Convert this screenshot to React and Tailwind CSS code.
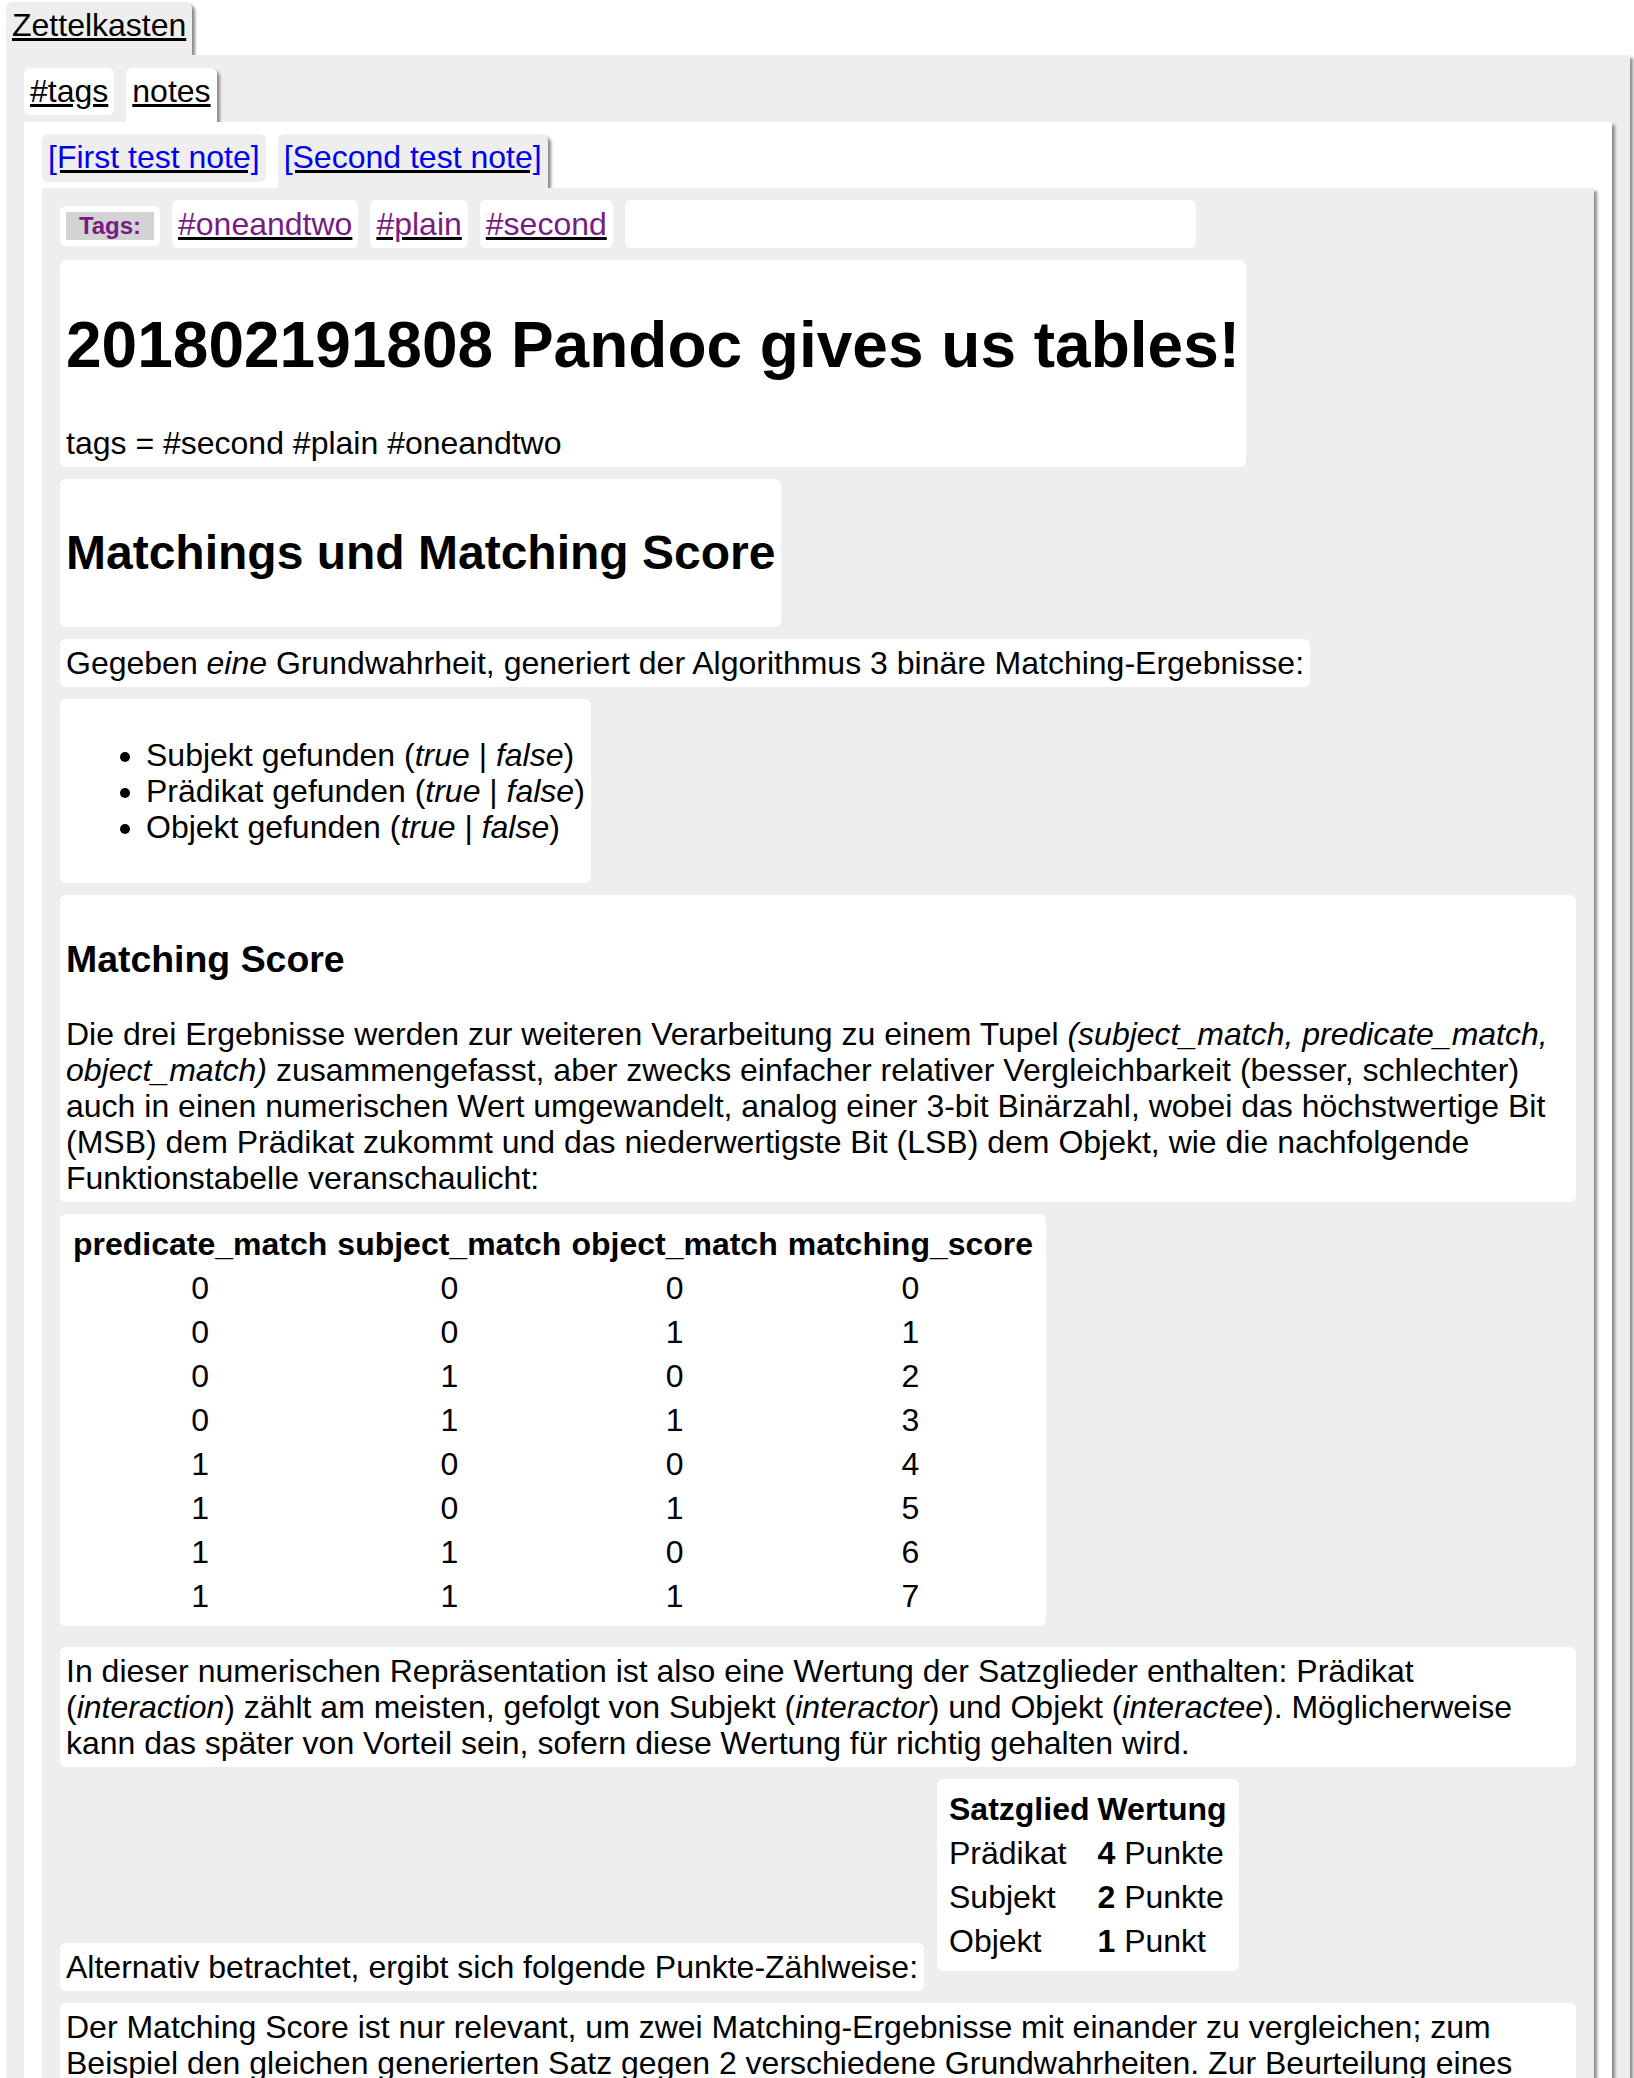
const SH = "shadow-[3px_3px_3px_#8c8c8c]";

function TagLink({ children }) {
  return (
    <a className="rounded-[6px] bg-white px-[6px] py-[6px] text-[#7a1a85] underline decoration-black">
      {children}
    </a>
  );
}

function Card({ className = "", children }) {
  return <div className={"rounded-[6px] bg-white " + className}>{children}</div>;
}

const rows = [
  [0, 0, 0, 0],
  [0, 0, 1, 1],
  [0, 1, 0, 2],
  [0, 1, 1, 3],
  [1, 0, 0, 4],
  [1, 0, 1, 5],
  [1, 1, 0, 6],
  [1, 1, 1, 7],
];

export default function App() {
  return (
    <div className="min-h-[2180px] bg-white pt-[2px] pl-[6px] pr-[4px] font-['Liberation_Sans',Arial,sans-serif] text-[32px] leading-[36px] text-black">
      {/* level 1 tabs */}
      <div className="flex items-start">
        <a className={"rounded-t-[6px] bg-[#eeeeee] px-[6px] pt-[5px] pb-[12px] underline decoration-black " + SH}>
          Zettelkasten
        </a>
      </div>

      {/* outer panel */}
      <div className={"relative bg-[#eeeeee] px-[18px] pt-[13px] pb-[18px] " + SH}>
        <div className="flex items-start gap-[12px]">
          <a className="rounded-[6px] bg-white px-[6px] pt-[5px] pb-[6px] underline decoration-black">#tags</a>
          <a className={"rounded-t-[6px] bg-white px-[6px] pt-[5px] pb-[13px] underline decoration-black " + SH}>notes</a>
        </div>

        {/* white panel */}
        <div className={"relative bg-white px-[18px] pt-[12px] pb-[18px] " + SH}>
          <div className="flex items-start gap-[12px]">
            <a className="rounded-[6px] bg-[#eeeeee] px-[6px] pt-[5px] pb-[7px] text-[#0000ee] underline decoration-black">
              [First test note]
            </a>
            <a className={"rounded-t-[6px] bg-[#eeeeee] px-[6px] pt-[5px] pb-[13px] text-[#0000ee] underline decoration-black " + SH}>
              [Second test note]
            </a>
          </div>

          {/* inner panel */}
          <div className={"relative flex flex-col items-start gap-[12px] bg-[#eeeeee] pl-[18px] pr-[18px] pt-[12px] pb-[30px] " + SH}>
            {/* tags row */}
            <div className="flex items-start gap-[12px]">
              <div className="mt-[6px] rounded-[6px] bg-white p-[6px]">
                <div className="w-[88px] bg-[#d3d3d3] text-center text-[24px] font-bold leading-[28px] text-[#7a1a85]">
                  Tags:
                </div>
              </div>
              <TagLink>#oneandtwo</TagLink>
              <TagLink>#plain</TagLink>
              <TagLink>#second</TagLink>
              <div className="h-[48px] w-[571px] rounded-[6px] bg-white"></div>
            </div>

            {/* title card */}
            <Card className="px-[6px] pt-[6px] pb-[6px]">
              <h1 className="mt-[43px] text-[64px] font-bold leading-[72px]">
                201802191808 Pandoc gives us tables!
              </h1>
              <div className="mt-[44px]">tags = #second #plain #oneandtwo</div>
            </Card>

            <Card className="p-[6px]">
              <h2 className="mt-[40px] mb-[41px] text-[48px] font-bold leading-[55px]">
                Matchings und Matching Score
              </h2>
            </Card>

            <Card className="p-[6px]">
              <p>
                Gegeben <em>eine</em> Grundwahrheit, generiert der Algorithmus 3 binäre Matching-Ergebnisse:
              </p>
            </Card>

            <Card className="p-[6px]">
              <ul className="my-[32px] list-disc pl-[80px]">
                <li>
                  Subjekt gefunden (<em>true</em> | <em>false</em>)
                </li>
                <li>
                  Prädikat gefunden (<em>true</em> | <em>false</em>)
                </li>
                <li>
                  Objekt gefunden (<em>true</em> | <em>false</em>)
                </li>
              </ul>
            </Card>

            <Card className="self-stretch p-[6px]">
              <h3 className="mt-[37px] mb-[36px] text-[37.44px] font-bold leading-[42px]">Matching Score</h3>
              <p>
                Die drei Ergebnisse werden zur weiteren Verarbeitung zu einem Tupel{" "}
                <em>(subject_match, predicate_match, object_match)</em> zusammengefasst, aber zwecks einfacher
                relativer Vergleichbarkeit (besser, schlechter) auch in einen numerischen Wert umgewandelt, analog
                einer 3-bit Binärzahl, wobei das höchstwertige Bit (MSB) dem Prädikat zukommt und das
                niederwertigste Bit (LSB) dem Objekt, wie die nachfolgende Funktionstabelle veranschaulicht:
              </p>
            </Card>

            <Card className="p-[6px]">
              <table className="border-separate border-spacing-[4px]">
                <thead>
                  <tr>
                    <th className="px-[3px] py-[2px] text-center font-bold leading-[36px]">predicate_match</th>
                    <th className="px-[3px] py-[2px] text-center font-bold leading-[36px]">subject_match</th>
                    <th className="px-[3px] py-[2px] text-center font-bold leading-[36px]">object_match</th>
                    <th className="px-[3px] py-[2px] text-center font-bold leading-[36px]">matching_score</th>
                  </tr>
                </thead>
                <tbody>
                  {rows.map((r, i) => (
                    <tr key={i}>
                      {r.map((v, j) => (
                        <td key={j} className="px-[3px] py-[2px] text-center leading-[36px]">
                          {v}
                        </td>
                      ))}
                    </tr>
                  ))}
                </tbody>
              </table>
            </Card>

            <Card className="mt-[9px] self-stretch p-[6px]">
              <p>
                In dieser numerischen Repräsentation ist also eine Wertung der Satzglieder enthalten: Prädikat (
                <em>interaction</em>) zählt am meisten, gefolgt von Subjekt (<em>interactor</em>) und Objekt (
                <em>interactee</em>). Möglicherweise kann das später von Vorteil sein, sofern diese Wertung für
                richtig gehalten wird.
              </p>
            </Card>

            <div className="flex items-end gap-[13px]">
              <Card className="p-[6px]">
                <p>Alternativ betrachtet, ergibt sich folgende Punkte-Zählweise:</p>
              </Card>
              <Card className="mb-[20px] p-[6px]">
                <table className="border-separate border-spacing-[4px]">
                  <thead>
                    <tr>
                      <th className="px-[2px] py-[2px] text-left font-bold leading-[36px]">Satzglied</th>
                      <th className="px-[2px] py-[2px] text-left font-bold leading-[36px]">Wertung</th>
                    </tr>
                  </thead>
                  <tbody>
                    <tr>
                      <td className="px-[2px] py-[2px] text-left leading-[36px]">Prädikat</td>
                      <td className="px-[2px] py-[2px] text-left leading-[36px]">
                        <strong>4</strong> Punkte
                      </td>
                    </tr>
                    <tr>
                      <td className="px-[2px] py-[2px] text-left leading-[36px]">Subjekt</td>
                      <td className="px-[2px] py-[2px] text-left leading-[36px]">
                        <strong>2</strong> Punkte
                      </td>
                    </tr>
                    <tr>
                      <td className="px-[2px] py-[2px] text-left leading-[36px]">Objekt</td>
                      <td className="px-[2px] py-[2px] text-left leading-[36px]">
                        <strong>1</strong> Punkt
                      </td>
                    </tr>
                  </tbody>
                </table>
              </Card>
            </div>

            <Card className="self-stretch p-[6px]">
              <p>
                Der Matching Score ist nur relevant, um zwei Matching-Ergebnisse mit einander zu vergleichen; zum
                Beispiel den gleichen generierten Satz gegen 2 verschiedene Grundwahrheiten. Zur Beurteilung eines
                einzelnen Matching-Ergebnisses ist er nur bedingt geeignet, da er keine Aussage über die absolute
                Qualität des generierten Satzes trifft.
              </p>
            </Card>
          </div>
        </div>
      </div>
    </div>
  );
}
